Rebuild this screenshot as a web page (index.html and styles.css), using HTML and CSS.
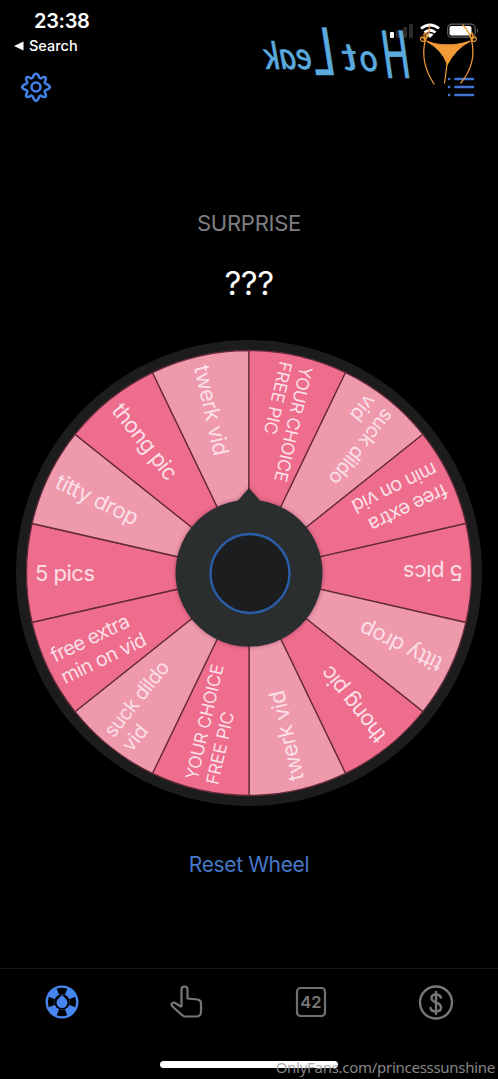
FILE: index.html
```html
<!DOCTYPE html>
<html lang="en">
<head>
<meta charset="utf-8">
<meta name="viewport" content="width=device-width">
<title>Wheel</title>
<link rel="stylesheet" href="styles.css">
</head>
<body>
<div class="app">
  <header class="status">
    <div class="status-left"><div class="time">23:38</div><div class="back"><svg width="10" height="10" viewBox="0 0 10 10"><path d="M0 5 9.500 .5v9z" fill="#fff"/></svg><span>Search</span></div></div>
    <svg class="status-icons" width="90" height="18" viewBox="0 0 90 18">
      <g fill="#2b2b2c"><rect x="0" y="9" width="4" height="6" rx="1" fill="#fff"/><rect x="6" y="7" width="4" height="8" rx="1"/><rect x="13" y="4" width="4" height="11" rx="1"/><rect x="19" y="1" width="4" height="14" rx="1"/></g>
      <g fill="none" stroke="#fff" stroke-width="2.800"><path d="M31 5.500q9-7 18 0"/><path d="M34.500 9.500q5.500-4.500 11 0"/></g><path d="m36.500 11.500q3.500-2.500 7 0L40 15z" fill="#fff"/>
      <rect x="57.700" y="1.200" width="27.500" height="13" rx="4" fill="none" stroke="#626262" stroke-width="1.200"/><rect x="59.500" y="3" width="22" height="9.500" rx="2" fill="#fff"/><path d="M87 5.500q2 2 0 4.500z" fill="#777"/>
    </svg>
  </header>
  <nav class="toolbar">
    <svg width="30" height="30" viewBox="-15 -15 30 30" fill="none" stroke="#4380e5" stroke-width="2.600" stroke-linejoin="round"><circle r="4.500"/><path d="M-2.500-11.500Q0-15 2.500-11.500C3-8.500 4.500-8 6.500-9.500 9.500-10.500 10.500-9.500 9.500-6.500 8-4.500 8.500-3 11.500-2.500 15 0 15 0 11.500 2.500 8.500 3 8 4.500 9.500 6.500 10.500 9.500 9.500 10.500 6.500 9.500 4.500 8 3 8.500 2.500 11.500 0 15 0 15-2.500 11.500-3 8.500-4.500 8-6.500 9.500-9.500 10.500-10.500 9.500-9.500 6.500-8 4.500-8.500 3-11.500 2.500-15 0-15 0-11.500-2.500-8.500-3-8-4.500-9.500-6.500-10.500-9.500-9.500-10.500-6.500-9.500-4.500-8-3-8.500-2.500-11.500Z"/></svg>
    <svg width="28" height="22" viewBox="0 0 28 22" stroke="#4474d2" stroke-width="2.600" stroke-linecap="round"><path d="M2 3h.1M2 11h.1M2 19h.1M8.500 3H26M8.500 11H26M8.500 19H26"/></svg>
  </nav>
  <main class="content">
    <div class="label">SURPRISE</div>
    <div class="result">???</div>
    <svg class="wheel" width="466" height="466" viewBox="-233 -233 466 466">
      <defs>
        <path id="slice" d="M0 0-216.900-49.500A222.500 222.500 0 0 0-216.900 49.500Z"/>
        <filter id="shade" x="-30%" y="-30%" width="160%" height="160%"><feDropShadow dx="0" dy="0" stdDeviation="2" flood-color="#381822" flood-opacity=".4"/></filter>
        <g id="half" class="half">
          <g><use href="#slice" class="rose"/><text x="-214" y="8" textLength="60">5 pics</text></g>
          <g transform="rotate(25.714)"><use href="#slice" class="blush"/><text x="-213" y="7.500" textLength="89">titty drop</text></g>
          <g transform="rotate(51.429)"><use href="#slice" class="rose"/><text x="-213" y="7" textLength="91">thong pic</text></g>
          <g transform="rotate(77.143)"><use href="#slice" class="blush"/><text x="-213" y="8" textLength="92">twerk vid</text></g>
          <g transform="rotate(102.857)"><use href="#slice" class="rose"/><text class="small" x="-214" y="-4" textLength="118">YOUR CHOICE</text><text class="small" x="-214" y="17" textLength="74">FREE PIC</text></g>
          <g transform="rotate(128.571)"><use href="#slice" class="blush"/><text class="medium" x="-214" y="-2.500" textLength="91">suck dildo</text><text class="medium" x="-214" y="20.500" textLength="28">vid</text></g>
          <g transform="rotate(154.286)"><use href="#slice" class="rose"/><text class="medium" x="-214" y="-3.500" textLength="85">free extra</text><text class="medium" x="-214" y="20.500" textLength="92">min on vid</text></g>
        </g>
      </defs>
      <circle r="233" fill="#1c1c1d"/>
      <use href="#half"/><use href="#half" transform="rotate(180)"/>
      <path filter="url(#shade)" fill="#2c2e2f" d="M-11-72.500 0-85 11-72.500A73.500 73.500 0 1 1-11-72.500Z"/>
      <circle cx="1" cy=".5" r="39.500" fill="#1b1d1f" stroke="#2b5ea8" stroke-width="2.400"/>
    </svg>
    <button class="reset">Reset Wheel</button>
  </main>
  <footer class="tabs">
    <svg width="34" height="34" viewBox="-17 -17 34 34"><circle r="16.500" fill="#4785ef"/><g fill="#000"><path id="spoke" d="M-5.300-13.300Q0-15 5.300-13.300L2.800-7Q0-9 -2.800-7Z"/><use href="#spoke" transform="rotate(90)"/><use href="#spoke" transform="rotate(180)"/><use href="#spoke" transform="rotate(270)"/><circle r="7.800"/></g><path d="M0-7 3-4A5.500 5.500 0 1 1-3-4Z" fill="#4785ef"/></svg>
    <svg width="34" height="34" viewBox="0 0 34 34" fill="none" stroke="#777" stroke-width="2.200" stroke-linejoin="round"><path d="M12.500 22V4.500q0-3 3-3t3 3v9l10 1q3.500.5 3.500 4v8q0 5-5 5H16.500q-2 0-3.500-1.500L3.500 21.500q-2-3 0-3.500 2-1 4 .8l5 3.200"/></svg>
    <svg width="34" height="34" viewBox="0 0 34 34"><rect x="3" y="3" width="28" height="28" rx="3.500" fill="none" stroke="#707070" stroke-width="2.200"/><text class="digits" x="17" y="23">42</text></svg>
    <svg width="36" height="36" viewBox="0 0 36 36" fill="none" stroke="#777" stroke-width="2.400" stroke-linecap="round"><circle cx="18" cy="17.500" r="16"/><path d="M23 12.500q-1-3-5-3-4.500 0-4.500 3.500 0 3 4.500 4.500 5 1.500 5 5 0 4-5 4t-5.500-3.500M18 7v22"/></svg>
  </footer>
  <div class="home-bar"></div>
  <svg class="brand" width="230" height="80" viewBox="0 0 230 80">
    <g class="script" transform="translate(157) scale(-1 1)">
      <text class="tall" transform="translate(-2 60) skewX(-4) scale(.58 1)">H</text>
      <text transform="translate(31 53) skewX(-4) scale(.9 1)">o</text>
      <text transform="translate(51 52) skewX(-4) scale(1.15 1)">t</text>
      <text class="tall" transform="translate(73 57) skewX(-4) scale(.7 1)">L</text>
      <text transform="translate(97 51) skewX(-4) scale(.85 1)">eak</text>
    </g>
    <g transform="translate(158) scale(.96 1)" fill="none" stroke="#f19a36" stroke-width="1.300" stroke-linecap="round"><path d="M17 23Q38 31 63 23 48 30 39 46 33 31 17 23Z" fill="#f19a36"/><path d="M16 22q5-7 4-14M64 22q-2-8-9-15M16 22q-6 22 9 44M64 22q6 23-11 43M39 42q-1 9-3 23M16 22q-5-6-5 0 2 3 5 0-3-7 0-7 2 2 0 7M64 22q5-6 5 0-2 3-5 0 3-7 0-7-2 2 0 7"/></g>
  </svg>
  <div class="credit">OnlyFans.com/princesssunshine</div>
</div>
</body>
</html>
```
FILE: styles.css
```css
* { box-sizing: border-box; }
body { margin: 0; background: #000; color: #fff; font-family: Inter, sans-serif; }
svg { display: block; flex-shrink: 0; }
.app { position: relative; width: 498px; height: 1079px; overflow: hidden; display: flex; flex-direction: column; background: #000; }
.status { height: 67px; padding: 9px 8px 0 14px; display: flex; justify-content: space-between; }
.status-left { display: flex; flex-direction: column; }
.time { margin-left: 20px; font-size: 20px; line-height: 25px; font-weight: 600; letter-spacing: -.3px; }
.back { display: flex; align-items: center; gap: 5px; font-size: 14.5px; font-weight: 500; line-height: 23px; }
.status-icons { margin-top: 14px; margin-right: 10px; }
.toolbar { height: 40px; padding: 0 23px 0 21px; display: flex; align-items: center; justify-content: space-between; }
.content { height: 861px; display: flex; flex-direction: column; align-items: center; }
.label { margin-top: 101px; color: #7e7e81; font-size: 22px; line-height: 30px; letter-spacing: -.25px; }
.result { margin-top: 24px; font-size: 33px; line-height: 42px; letter-spacing: -.5px; }
.wheel { margin-top: 36px; }
.reset { margin-top: 44px; padding: 0; border: 0; background: none; color: #4678c7; font: 21px/30px Inter, sans-serif; letter-spacing: -.35px; }
.half { fill: #fcdfe6; font: 22px Inter, sans-serif; }
.rose { fill: #ee6d8d; stroke: #642a3a; stroke-width: 1.3px; }
.blush { fill: #ef99ad; stroke: #642a3a; stroke-width: 1.3px; }
.half text { stroke: none; }
.half .small { font-size: 17.5px; }
.half .medium { font-size: 20px; }
.tabs { height: 92px; padding: 16px 44px 0 45px; display: flex; justify-content: space-between; border-top: 1px solid #191919; }
.digits { font: 600 16.5px Inter, sans-serif; fill: #777; text-anchor: middle; }
.home-bar { align-self: center; margin-top: 1px; width: 178px; height: 7px; border-radius: 4px; background: #fff; }
.brand { position: absolute; left: 252px; top: 18px; overflow: visible; }
.script { fill: #5baade; stroke: #5baade; stroke-width: .7px; font: italic 38px Lato, sans-serif; }
.script .tall { font-size: 66px; }
.credit { position: absolute; right: 3px; bottom: 2px; color: rgba(160,160,160,.85); font: 15px/20px "Noto Sans", sans-serif; letter-spacing: -.28px; }
```
